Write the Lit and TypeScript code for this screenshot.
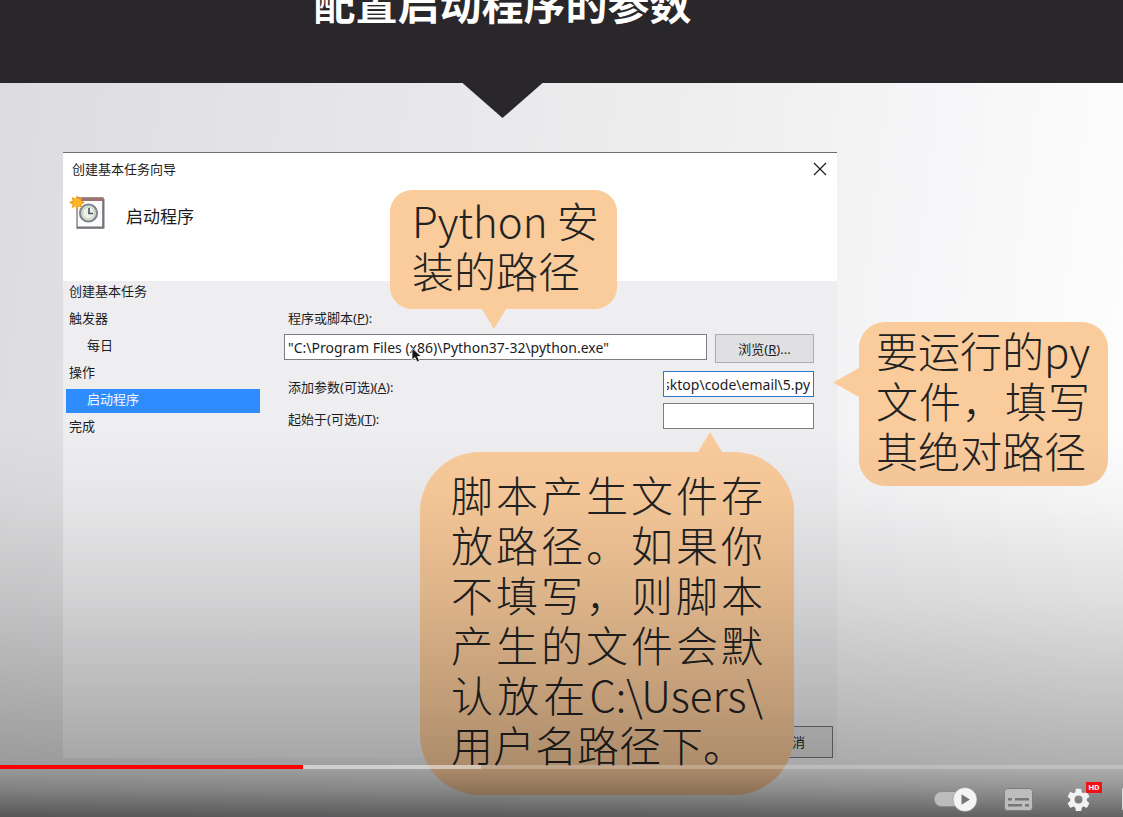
import { LitElement, html, css, svg } from "lit";
import { customElement, state } from "lit/decorators.js";

@customElement("task-wizard")
class TaskWizard extends LitElement {
  static styles = css`
    :host {
      display: flex;
      flex-direction: column;
      box-sizing: border-box;
      min-height: 606px;
      border-top: 1px solid #6e6e70;
      background: #eeeef0;
      color: #1c1c1e;
      font: 13px/20px "Noto Sans", "Noto Sans CJK SC", sans-serif;
    }
    .head {
      display: flex;
      flex-direction: column;
      gap: 10px;
      height: 128px;
      background: #fff;
    }
    .bar {
      display: flex;
      justify-content: space-between;
      align-items: center;
      height: 32px;
      padding: 0 9px;
    }
    .close {
      display: flex;
      padding: 1px;
      border: 0;
      background: none;
    }
    .intro {
      display: flex;
      align-items: flex-start;
      gap: 20px;
      padding-left: 6px;
    }
    h2 {
      margin: 10px 0 0;
      font-size: 17px;
      line-height: 24px;
      font-weight: 400;
    }
    .body {
      display: grid;
      grid-template-columns: 194px minmax(0, 1fr);
      gap: 24px;
      padding: 0 23px 0 3px;
      flex: 1;
    }
    ol {
      display: flex;
      flex-direction: column;
      gap: 3px;
      margin: 0;
      padding: 0;
      list-style: none;
    }
    li {
      box-sizing: border-box;
      height: 24px;
      padding: 0 3px;
    }
    .sub {
      padding-left: 21px;
    }
    .on {
      background: #2f8cff;
      color: #f4f8ff;
    }
    form {
      display: flex;
      flex-direction: column;
      gap: 6px;
      padding-top: 27px;
    }
    label {
      padding-left: 4px;
    }
    .program {
      display: flex;
      flex-direction: column;
      gap: 6px;
      padding-bottom: 2px;
    }
    .line {
      display: flex;
      gap: 8px;
    }
    .row {
      display: flex;
      align-items: flex-end;
      justify-content: space-between;
    }
    input {
      box-sizing: border-box;
      width: 151px;
      height: 26px;
      padding: 0 3px;
      border: 1px solid #7d7d80;
      border-radius: 0;
      outline: 0;
      background: #fff;
      color: #1c1c1e;
      font: inherit;
      font-size: 14px;
    }
    .line input {
      flex: 1;
      min-width: 0;
    }
    .active {
      border-color: #2a78cc;
    }
    .btn {
      box-sizing: border-box;
      width: 99px;
      height: 29px;
      padding: 0;
      border: 1px solid #adadb0;
      background: #e0e0e2;
      color: #1c1c1e;
      font: inherit;
    }
    .foot {
      display: flex;
      justify-content: flex-end;
      padding-right: 4px;
    }
    .foot .btn {
      width: 82px;
      height: 32px;
      border-color: #77777a;
    }
  `;

  firstUpdated() {
    const field = this.renderRoot.querySelector<HTMLInputElement>("#args")!;
    field.scrollLeft = field.scrollWidth;
  }

  render() {
    return html`
      <div class="head">
        <div class="bar">
          <span>创建基本任务向导</span>
          <button class="close" aria-label="关闭">
            <svg width="14" height="14" viewBox="0 0 14 14" fill="none" stroke="#222" stroke-width="1.3">
              <path d="M1 1 13 13M13 1 1 13" />
            </svg>
          </button>
        </div>
        <div class="intro">
          <svg width="37" height="37" viewBox="0 0 37 37">
            <path d="M8 3H34V33H8Z" fill="#fbfbfd" stroke="#8d8688" stroke-width="1.5" />
            <path d="M8 32.500H34.500V4" fill="none" stroke="#77727a" stroke-width="2" />
            <path d="M8 2.500H34V6H8Z" fill="#9a7472" />
            <circle cx="19.500" cy="18" r="8.500" fill="#e9edf0" stroke="#7f8588" stroke-width="2.200" />
            <circle cx="19.500" cy="18" r="6" fill="#eef1e4" stroke="#bfc8b0" />
            <path d="M20 13V18.500H24" fill="none" stroke="#3d5572" stroke-width="1.600" />
            <path
              d="M8 0 9.600 3.700 13.300 1.700 12.300 5.600 16 7.500 12.300 9.400 13.300 13.300 9.600 11.300 8 15 6.200 11.300 2.600 13.300 3.600 9.400 0 7.500 3.600 5.600 2.600 1.700 6.200 3.700Z"
              fill="#f2a01c"
            />
            <circle cx="8" cy="7.500" r="4.200" fill="#ffb52a" />
          </svg>
          <h2>启动程序</h2>
        </div>
      </div>
      <div class="body">
        <ol>
          <li>创建基本任务</li>
          <li>触发器</li>
          <li class="sub">每日</li>
          <li>操作</li>
          <li class="sub on">启动程序</li>
          <li>完成</li>
        </ol>
        <form>
          <div class="program">
            <label for="program">程序或脚本(<u>P</u>):</label>
            <div class="line">
              <input id="program" .value=${'"C:\\Program Files (x86)\\Python37-32\\python.exe"'} />
              <button type="button" class="btn">浏览(<u>R</u>)...</button>
            </div>
          </div>
          <div class="row">
            <label for="args">添加参数(可选)(<u>A</u>):</label>
            <input id="args" class="active" .value=${"Desktop\\code\\email\\5.py"} />
          </div>
          <div class="row">
            <label for="start">起始于(可选)(<u>T</u>):</label>
            <input id="start" />
          </div>
        </form>
      </div>
      <div class="foot"><button class="btn">取消</button></div>
    `;
  }
}

@customElement("app-root")
class AppRoot extends LitElement {
  @state() played = 27;
  @state() buffered = 42.8;

  static styles = css`
    :host {
      display: block;
    }
    .player {
      position: relative;
      display: flex;
      flex-direction: column;
      height: 100vh;
      overflow: hidden;
      background: linear-gradient(97deg, #dcdcde 0%, #e6e6e9 30%, #eeeeef 58%, #f6f6f8 78%, #fdfdfe 96%);
      font-family: "Noto Sans CJK SC", sans-serif;
    }
    .header {
      display: flex;
      flex-direction: column;
      align-items: center;
      flex: none;
      height: 118px;
      padding-right: 118px;
      background: linear-gradient(#29272a, #29272a) top / 100% 83px no-repeat;
      overflow: hidden;
    }
    h1 {
      height: 83px;
      margin: -19px 0 19px;
      color: #fff;
      font-size: 42px;
      line-height: 42px;
      font-weight: 700;
    }
    .notch {
      flex: none;
      width: 80px;
      height: 35px;
      background: #29272a;
      clip-path: polygon(0 0, 100% 0, 50% 100%);
    }
    .stage {
      position: relative;
      margin: 34px 286px 0 63px;
    }
    .note {
      position: absolute;
      box-sizing: border-box;
      background: #facb9b;
      color: #222;
      font-size: 42px;
      line-height: 50px;
      font-weight: 300;
      text-align: justify;
    }
    .note p {
      margin: 0;
    }
    .note::after {
      content: "";
      position: absolute;
      background: inherit;
    }
    .path {
      left: 327px;
      top: 38px;
      width: 227px;
      padding: 5px 12px 14px 22px;
      border-radius: 22px;
      text-align: left;
    }
    .path::after {
      left: 92px;
      top: 100%;
      width: 24px;
      height: 20px;
      clip-path: polygon(0 0, 100% 0, 50% 100%);
    }
    .output {
      left: 357px;
      top: 300px;
      width: 374px;
      padding: 17px 31px 26px;
      border-radius: 60px;
    }
    .output::after {
      left: 278px;
      bottom: 100%;
      width: 24px;
      height: 20px;
      clip-path: polygon(50% 0, 100% 100%, 0 100%);
    }
    .script {
      left: 796px;
      top: 170px;
      width: 249px;
      padding: 3px 18px 11px 17px;
      border-radius: 26px;
    }
    .script::after {
      right: 100%;
      top: 46px;
      width: 26px;
      height: 29px;
      clip-path: polygon(0 50%, 100% 0, 100% 100%);
    }
    .cursor {
      position: absolute;
      left: 348px;
      top: 195px;
    }
    .shade {
      position: absolute;
      inset: 0;
      background: linear-gradient(
        to top,
        rgba(0, 0, 0, 0.61) 0,
        rgba(0, 0, 0, 0.42) 28px,
        rgba(0, 0, 0, 0.31) 50px,
        rgba(0, 0, 0, 0.23) 115px,
        rgba(0, 0, 0, 0.12) 215px,
        rgba(0, 0, 0, 0.03) 320px,
        transparent 390px
      );
    }
    .controls {
      position: absolute;
      left: 0;
      right: 0;
      bottom: 0;
      display: flex;
      flex-direction: column;
      gap: 12px;
    }
    .seek {
      appearance: none;
      display: block;
      width: 100%;
      height: 4px;
      margin: 0;
    }
    .seek::-webkit-slider-thumb {
      appearance: none;
      width: 0;
      height: 0;
    }
    .buttons {
      display: flex;
      justify-content: flex-end;
      height: 36px;
      margin-right: -45px;
    }
    .buttons button {
      position: relative;
      display: flex;
      justify-content: center;
      width: 60px;
      padding: 0;
      border: 0;
      background: none;
    }
    .hd {
      position: absolute;
      left: 38px;
      top: 1px;
      width: 16px;
      background: #f01212;
      color: #fff;
      font: 700 8px/11px Roboto, sans-serif;
      text-align: center;
    }
  `;

  gear() {
    return svg`<path fill="#f2f2f2" fill-rule="evenodd"
      d="M27.950 19.780c.04-.5.06-1.170 0-1.560l2.350-1.840c.2-.17.27-.5.13-.77l-2.220-3.850c-.13-.24-.42-.32-.67-.24l-2.760 1.120c-.58-.44-1.200-.81-1.880-1.090l-.42-2.940c-.04-.27-.28-.46-.55-.46h-4.440c-.28 0-.5.19-.55.46l-.42 2.940c-.68.28-1.310.66-1.880 1.090l-2.760-1.120c-.25-.09-.54 0-.67.24l-2.220 3.850c-.13.24-.08.54.13.71l2.340 1.820c-.04.4-.07.82-.07 1.190s.02.79.07 1.180l-2.340 1.820c-.21.17-.27.470-.13.710l2.220 3.850c.13.240.42.320.67.240l2.760-1.120c.58.440 1.200.810 1.880 1.090l.42 2.940c.05.270.27.460.55.460h4.440c.27 0 .51-.19.550-.46l.42-2.940c.68-.28 1.310-.65 1.880-1.090l2.760 1.120c.25.090.54 0 .67-.24l2.220-3.850c.13-.24.08-.54-.13-.71zM19.710 23a4 4 0 1 1 0-8 4 4 0 0 1 0 8z"/>`;
  }

  render() {
    const track = `background: linear-gradient(90deg, #f00 ${this.played}%, rgba(255,255,255,.5) ${this.played}% ${this.buffered}%, rgba(255,255,255,.22) ${this.buffered}%)`;
    return html`
      <div class="player">
        <header class="header">
          <h1>配置启动程序的参数</h1>
          <div class="notch"></div>
        </header>
        <main class="stage">
          <task-wizard></task-wizard>
          <aside class="note path"><p>Python 安装的路径</p></aside>
          <aside class="note script"><p>要运行的py文件，填写其绝对路径</p></aside>
          <aside class="note output">
            <p>脚本产生文件存放路径。如果你不填写，则脚本产生的文件会默认放在C:\\Users\\<wbr />用户名路径下。</p>
          </aside>
          <svg class="cursor" width="12" height="17" viewBox="0 0 12 17">
            <path d="M1 1V13L4 10.500 6 15 8.500 14 6.500 9.500H10.500Z" fill="#161618" stroke="#fff" stroke-width=".8" />
          </svg>
        </main>
        <div class="shade"></div>
        <div class="controls">
          <input
            class="seek"
            type="range"
            aria-label="播放进度"
            min="0"
            max="100"
            .value=${String(this.played)}
            style=${track}
          />
          <div class="buttons">
            <button aria-label="自动播放">
              <svg width="60" height="36" viewBox="0 0 60 36">
                <rect x="6" y="10.500" width="36" height="15" rx="7.500" fill="#bcbcbc" stroke="#8a8a8a" />
                <circle cx="37" cy="18.500" r="12" fill="#f4f4f4" stroke="#808080" stroke-opacity=".5" />
                <path d="M33.500 13.200V23.800L42 18.500Z" fill="#757575" />
              </svg>
            </button>
            <button aria-label="字幕">
              <svg width="36" height="36" viewBox="0 0 36 36">
                <rect x="4.500" y="7.500" width="28" height="22" rx="3" fill="#bdbdbd" stroke="#7d7d7d" />
                <path d="M8 17h4v2.500H8zM15 17h14v2.500H15zM8 23h14v2.500H8zM25 23h4v2.500h-4z" fill="#777" />
              </svg>
            </button>
            <button aria-label="设置">
              <svg width="36" height="36" viewBox="0 0 36 36">
                <g transform="translate(-1.200 -.4)">${this.gear()}</g>
              </svg>
              <span class="hd">HD</span>
            </button>
            <button aria-label="迷你播放器">
              <svg width="36" height="36" viewBox="0 0 36 36">
                <rect x="3" y="7" width="30" height="22" rx="2" fill="none" stroke="#ddd" stroke-width="2" />
              </svg>
            </button>
          </div>
        </div>
      </div>
    `;
  }
}
